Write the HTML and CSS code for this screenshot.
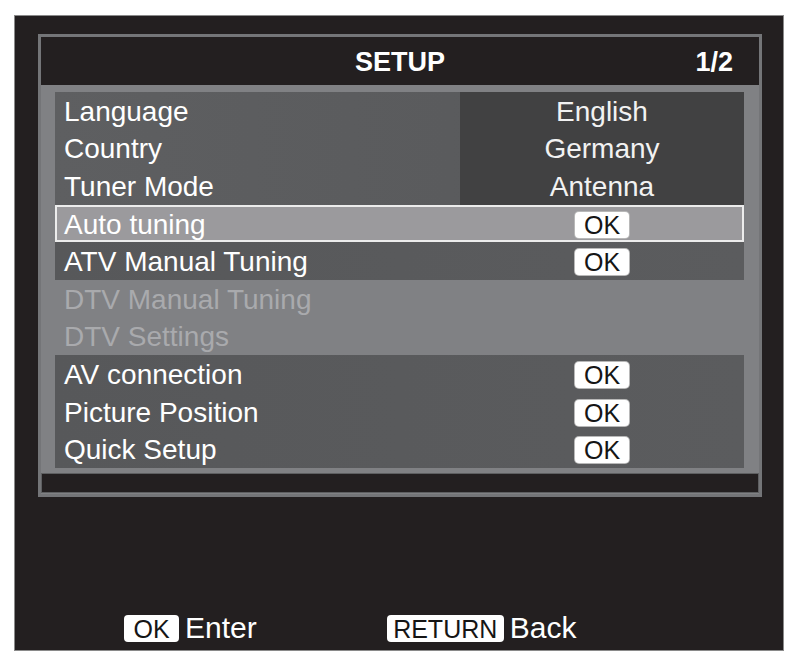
FILE: index.html
```html
<!DOCTYPE html>
<html>
<head>
<meta charset="utf-8">
<link rel="stylesheet" href="styles.css">
</head>
<body>
<div class="screen">
  <div class="panel">
    <div class="header">
      <span></span>
      <span class="title">SETUP</span>
      <span class="page">1/2</span>
    </div>
    <div class="body">
      <div class="row info"><span class="label">Language</span><span class="value">English</span></div>
      <div class="row info"><span class="label">Country</span><span class="value">Germany</span></div>
      <div class="row info"><span class="label">Tuner Mode</span><span class="value">Antenna</span></div>
      <div class="row selected"><span class="label">Auto tuning</span><span class="value"><span class="key">OK</span></span></div>
      <div class="row dark"><span class="label">ATV Manual Tuning</span><span class="value"><span class="key">OK</span></span></div>
      <div class="row disabled"><span class="label">DTV Manual Tuning</span><span class="value"></span></div>
      <div class="row disabled"><span class="label">DTV Settings</span><span class="value"></span></div>
      <div class="row dark"><span class="label">AV connection</span><span class="value"><span class="key">OK</span></span></div>
      <div class="row dark"><span class="label">Picture Position</span><span class="value"><span class="key">OK</span></span></div>
      <div class="row dark"><span class="label">Quick Setup</span><span class="value"><span class="key">OK</span></span></div>
    </div>
    <div class="bar"></div>
  </div>
  <div class="hints">
    <div class="hint"><span class="fkey ok">OK</span><span class="htext">Enter</span></div>
    <div class="hint"><span class="fkey ret">RETURN</span><span class="htext">Back</span></div>
  </div>
</div>
</body>
</html>
```

FILE: styles.css
```css
html, body {
  margin: 0;
  padding: 0;
  background: #ffffff;
}

body {
  font-family: "Liberation Sans", Arial, sans-serif;
}

.screen {
  box-sizing: border-box;
  margin: 15px 0 0 14px;
  width: 770px;
  height: 636px;
  background: #231f20;
  border: 1px solid #8a8a8a;
  padding: 18px 0 0 23px;
  display: flex;
  flex-direction: column;
}

.panel {
  box-sizing: border-box;
  width: 724px;
  border: 3px solid #747578;
  background: #808184;
  display: flex;
  flex-direction: column;
}

.header {
  height: 48px;
  background: #231f20;
  display: grid;
  grid-template-columns: 1fr auto 1fr;
  align-items: center;
  padding: 2px 26px 0 26px;
  box-sizing: border-box;
  color: #ffffff;
  font-weight: bold;
  font-size: 27px;
}

.page {
  justify-self: end;
}

.body {
  padding: 7px 15px 5px 14px;
  display: flex;
  flex-direction: column;
}

.row {
  height: 37.6px;
  display: grid;
  grid-template-columns: 405px 1fr;
  align-items: center;
  font-size: 28px;
  color: #ffffff;
}

.label {
  padding-left: 9px;
  padding-top: 2px;
  white-space: nowrap;
}

.value {
  height: 100%;
  box-sizing: border-box;
  padding-top: 2px;
  display: flex;
  align-items: center;
  justify-content: center;
}

.row.info {
  background: linear-gradient(to right, #5e5f61, #57585a);
}

.row.info .value {
  background: #414142;
  color: #f2f2f2;
}

.row.selected {
  background: #9b9a9d;
  box-shadow: inset 0 0 0 2px #ececec;
}

.row.dark {
  background: linear-gradient(to right, #57585a, #5b5c5e);
}

.row.disabled {
  color: #a9aaad;
}

.key {
  display: inline-block;
  width: 54px;
  height: 26px;
  line-height: 27px;
  text-align: center;
  background: #ffffff;
  color: #151515;
  font-size: 25px;
  border-radius: 4px;
  box-shadow: 0 0 0 1px #b8b8b8;
}

.bar {
  height: 20px;
  box-sizing: border-box;
  background: #231f20;
  border: 1px solid #5e5f61;
  margin-bottom: 1px;
}

.hints {
  margin-top: auto;
  margin-bottom: 6px;
  padding-left: 86px;
  display: flex;
  align-items: center;
  gap: 130px;
}

.hint {
  display: flex;
  align-items: center;
  gap: 6px;
}

.fkey {
  display: inline-block;
  height: 27px;
  line-height: 28px;
  text-align: center;
  background: #ffffff;
  color: #151515;
  font-size: 25px;
  border-radius: 4px;
}

.fkey.ok {
  width: 55px;
}

.fkey.ret {
  width: 117px;
}

.htext {
  color: #ffffff;
  font-size: 30px;
  line-height: 32px;
}
```
